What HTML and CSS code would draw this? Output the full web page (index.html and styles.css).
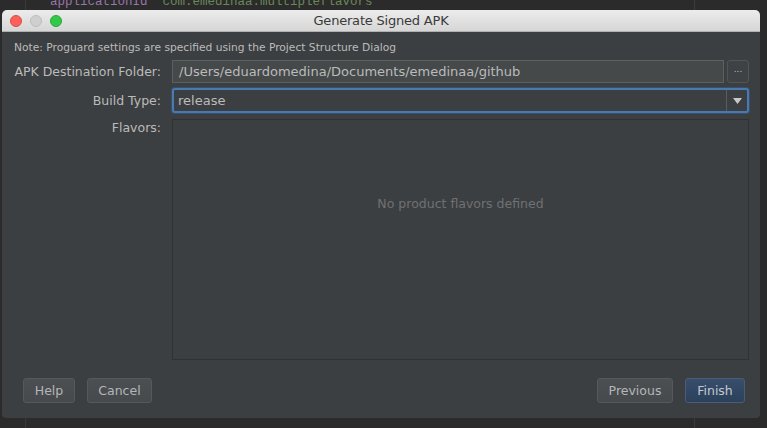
FILE: index.html
```html
<!DOCTYPE html>
<html>
<head>
<meta charset="utf-8">
<link rel="stylesheet" href="styles.css">
</head>
<body>
<div class="desktop">
  <div class="editor">
    <div class="gutter-line"></div>
    <div class="margin-line"></div>
    <div class="code"><span class="kw">applicationId</span> <span class="str">"com.emedinaa.multipleflavors"</span></div>
  </div>
  <div class="dialog">
    <div class="titlebar">
      <div class="lights">
        <span class="light red"></span>
        <span class="light gray"></span>
        <span class="light green"></span>
      </div>
      <div class="title">Generate Signed APK</div>
    </div>
    <div class="body">
      <div class="note">Note: Proguard settings are specified using the Project Structure Dialog</div>
      <div class="form">
        <div class="label row1">APK Destination Folder:</div>
        <div class="pathrow row1">
          <div class="field">/Users/eduardomedina/Documents/emedinaa/github</div>
          <div class="browse">...</div>
        </div>
        <div class="label row2">Build Type:</div>
        <div class="combo row2">
          <div class="combo-text">release</div>
          <div class="combo-arrow"><svg width="9" height="6" viewBox="0 0 9 6"><path d="M0 0H9L4.5 6Z" fill="#c8c8c8"/></svg></div>
        </div>
        <div class="label row3">Flavors:</div>
        <div class="flavors row3">No product flavors defined</div>
      </div>
      <div class="buttons">
        <div class="left">
          <div class="btn help">Help</div>
          <div class="btn cancel">Cancel</div>
        </div>
        <div class="right">
          <div class="btn previous">Previous</div>
          <div class="btn finish">Finish</div>
        </div>
      </div>
    </div>
  </div>
</div>
</body>
</html>
```
FILE: styles.css
```css
html, body {
  margin: 0;
  padding: 0;
  background: #2b2b2b;
}
.desktop {
  position: relative;
  width: 767px;
  height: 428px;
  overflow: hidden;
  background: #2b2b2b;
  font-family: "DejaVu Sans", "Liberation Sans", sans-serif;
}
.editor {
  position: relative;
  width: 767px;
  height: 428px;
}
.gutter-line {
  position: absolute;
  left: 25px;
  top: 0;
  bottom: 0;
  width: 1px;
  background: #3a3a3a;
}
.margin-line {
  position: absolute;
  left: 694px;
  top: 0;
  bottom: 0;
  width: 1px;
  background: #3c3c3c;
}
.code {
  position: absolute;
  left: 50px;
  top: -6px;
  font-family: "Liberation Mono", "DejaVu Sans Mono", monospace;
  font-size: 12.5px;
  line-height: 16px;
  white-space: pre;
}
.kw { color: #9876aa; }
.str { color: #6a8759; }

.dialog {
  position: absolute;
  left: 2px;
  top: 10px;
  width: 758px;
  height: 408px;
  background: #3c3f41;
  border-radius: 5px 5px 4px 4px;
  overflow: hidden;
  display: flex;
  flex-direction: column;
}
.titlebar {
  height: 21px;
  background: linear-gradient(#ececec, #d6d6d6);
  border-bottom: 1px solid #b1b1b1;
  position: relative;
  display: flex;
  align-items: center;
  justify-content: center;
  flex-shrink: 0;
}
.lights {
  position: absolute;
  left: 8px;
  top: 5px;
  display: flex;
  gap: 8px;
}
.light {
  width: 12px;
  height: 12px;
  border-radius: 50%;
  box-sizing: border-box;
}
.red { background: #fc605b; border: 1px solid #de4a44; }
.gray { background: #cfcfcf; border: 1px solid #bdbdbd; }
.green { background: #34c84a; border: 1px solid #27aa35; }
.title {
  font-size: 13px;
  color: #3a3a3a;
  font-family: "DejaVu Sans", sans-serif;
  letter-spacing: -0.2px;
}
.body {
  flex: 1;
  display: flex;
  flex-direction: column;
  padding: 0 11px 0 12px;
  color: #bbbbbb;
  font-size: 12.5px;
}
.note {
  font-size: 10.7px;
  margin-top: 9px;
  height: 14px;
  line-height: 14px;
  color: #bbbbbb;
}
.form {
  margin-top: 5px;
  display: grid;
  grid-template-columns: 147px 1fr;
  column-gap: 11px;
  grid-template-rows: 23px 25px 242px;
  row-gap: 5px;
}
.row3 { margin-top: 1px; }
.label {
  text-align: right;
  line-height: 23px;
  font-size: 12.5px;
  color: #bbbbbb;
  white-space: nowrap;
}
.label.row2 { line-height: 25px; }
.label.row3 { line-height: 18px; }
.pathrow {
  display: flex;
  gap: 3px;
}
.field {
  flex: 1;
  box-sizing: border-box;
  border: 1px solid #5d5f60;
  background: #45494a;
  line-height: 21px;
  padding-left: 6px;
  font-size: 13px;
  color: #bbbbbb;
}
.browse {
  width: 22px;
  box-sizing: border-box;
  border: 1px solid #515556;
  border-radius: 3px;
  background: #3f4244;
  color: #bbbbbb;
  font-size: 9px;
  text-align: center;
  line-height: 17px;
}
.combo {
  display: flex;
  box-sizing: border-box;
  border: 2px solid #4a78b0;
  border-radius: 3px;
  background: #3c3f41;
  box-shadow: 0 0 0 1px #37516c;
}
.combo-text {
  flex: 1;
  line-height: 21px;
  padding-left: 4px;
  font-size: 13px;
  color: #bbbbbb;
}
.combo-arrow {
  width: 20px;
  border-left: 1px solid #5a5d5f;
  display: flex;
  align-items: center;
  justify-content: center;
}
.flavors {
  box-sizing: border-box;
  border: 1px solid #2f3133;
  background: #3c3f41;
  display: flex;
  align-items: center;
  justify-content: center;
  color: #6f7173;
  font-size: 12.5px;
  padding-bottom: 72px;
}
.buttons {
  margin-top: 18px;
  display: flex;
  justify-content: space-between;
  padding-left: 9px;
  padding-right: 4px;
}
.left, .right {
  display: flex;
  gap: 12px;
}
.btn {
  height: 25px;
  box-sizing: border-box;
  border: 1px solid #56595b;
  border-radius: 3px;
  background: linear-gradient(#4b4f51, #464a4c);
  color: #b4b6b8;
  font-size: 12.5px;
  line-height: 23px;
  text-align: center;
}
.help { width: 52px; }
.cancel { width: 65px; }
.previous { width: 76px; }
.finish {
  width: 60px;
  background: linear-gradient(#384e6c, #2b405b);
  border-color: #4a5d77;
  color: #c5c9cf;
}
```
